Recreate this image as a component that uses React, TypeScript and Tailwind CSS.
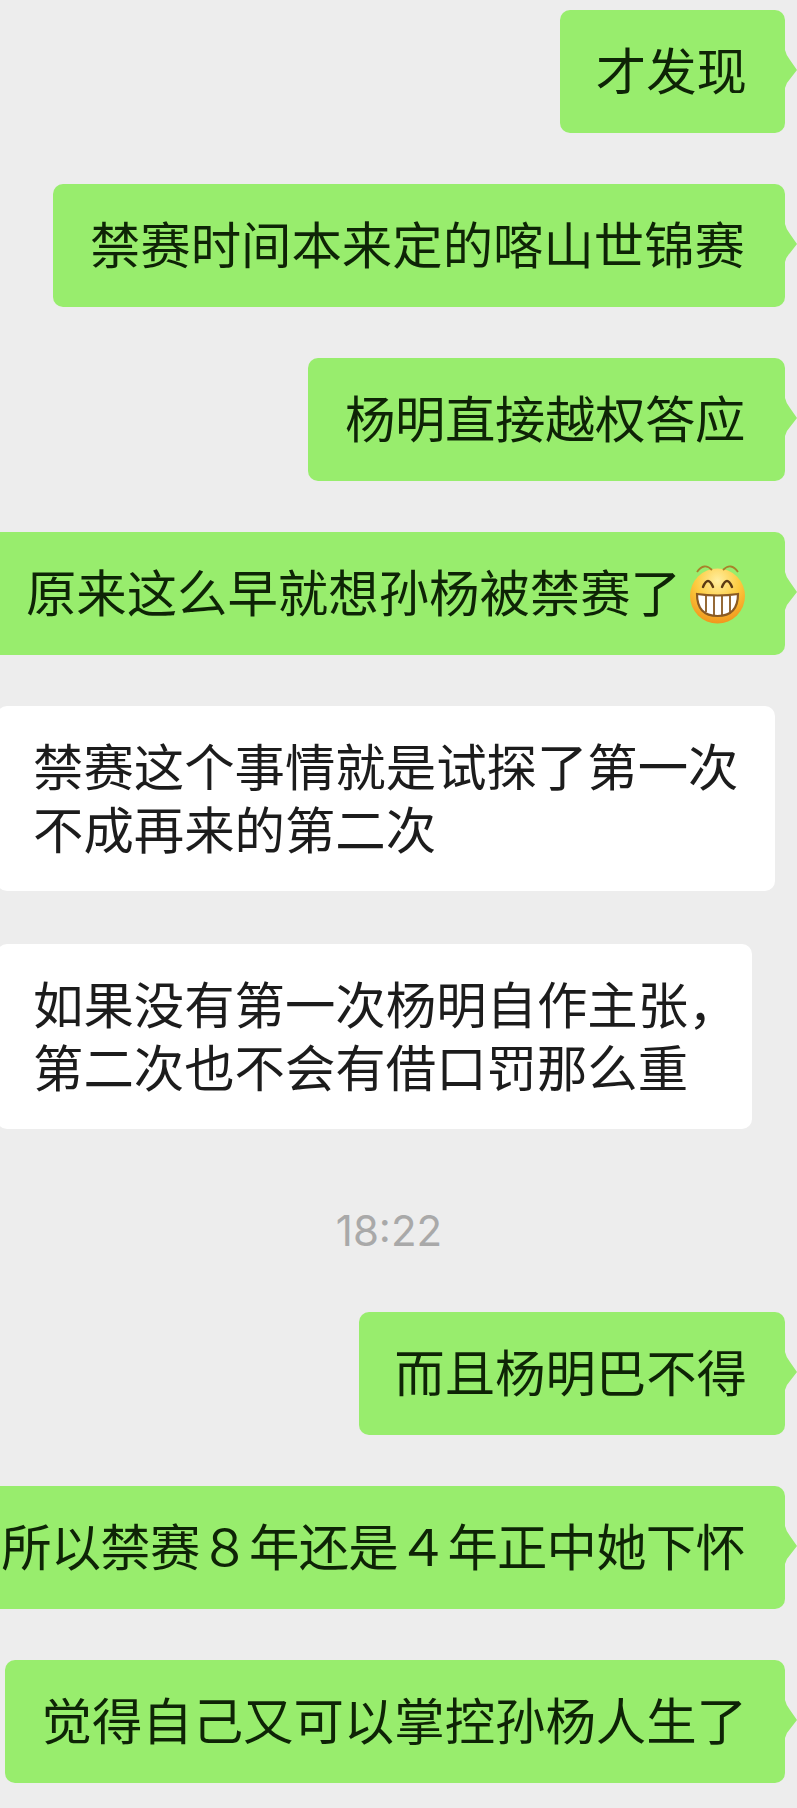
const fontClass = "font-['Noto_Sans_CJK_SC','PingFang_SC',sans-serif]"

// 开口笑 emoji
function GrinEmoji() {
  return (
    <svg viewBox="0 0 58 60" className="ml-[8px] mr-[-2px] h-[60px] w-[58px] shrink-0">
      <defs>
        <radialGradient id="face" cx="50%" cy="22%" r="80%">
          <stop offset="0%" stopColor="#ffeea0" />
          <stop offset="50%" stopColor="#fdcb3f" />
          <stop offset="100%" stopColor="#f0931a" />
        </radialGradient>
      </defs>
      <circle cx="28.5" cy="32" r="27.5" fill="url(#face)" />
      <path d="M8 8 Q15 -2 23 6" fill="none" stroke="#a8822a" strokeWidth="1.8" />
      <path d="M34 6 Q42 -2 49 8" fill="none" stroke="#a8822a" strokeWidth="1.8" />
      <path d="M14 23 Q19 11 24 23" fill="none" stroke="#5b3a12" strokeWidth="2.4" strokeLinecap="round" />
      <path d="M33 23 Q38 11 43 23" fill="none" stroke="#5b3a12" strokeWidth="2.4" strokeLinecap="round" />
      <path d="M8 30 Q28.5 33 49 30 Q49 52 28.5 52 Q8 52 8 30Z" fill="#fff" stroke="#8a5a22" strokeWidth="2.2" />
      <path d="M17 32 V48 M25 32 V51 M33 32 V51 M41 32 V48" stroke="#8a5a22" strokeWidth="1.8" fill="none" />
    </svg>
  )
}

function Tail() {
  return (
    <svg viewBox="0 0 12 38" className="absolute left-full top-[40px] h-[38px] w-[12px]">
      <path d="M0 0 Q1 5 5 10 L12 20 L5 29 Q1 33 0 38Z" fill="#98ed6d" />
    </svg>
  )
}

function Sent({ text, width, emoji, textClass = 'mb-[6px]', padding = 'pr-[40px]' }: { text: string; width: string; emoji?: boolean; textClass?: string; padding?: string }) {
  return (
    <div className={`relative mr-[12px] flex h-[123px] shrink-0 items-center justify-end whitespace-nowrap rounded-[10px] bg-[#98ed6d] text-[50.4px] leading-[63px] text-[#0e2406] ${padding} ${width}`}>
      <span className={textClass}>{text}</span>
      {emoji && <GrinEmoji />}
      <Tail />
    </div>
  )
}

function Received({ lines, width }: { lines: string[]; width: string }) {
  return (
    <div className={`ml-[-3px] h-[185px] shrink-0 whitespace-nowrap rounded-[10px] bg-white pl-[36px] pt-[27px] text-[50.4px] leading-[63px] text-[#1c1c1c] ${width}`}>
      {lines.map((line) => (
        <div key={line}>{line}</div>
      ))}
    </div>
  )
}

export default function App() {
  return (
    <div className={`flex h-[1808px] w-[797px] flex-col overflow-hidden bg-[#ededed] pt-[10px] ${fontClass}`}>
      <div className="flex flex-col items-end gap-[51px]">
        <Sent text="才发现" width="w-[225px]" padding="pr-[38px]" />
        <Sent text="禁赛时间本来定的喀山世锦赛" width="w-[732px]" />
        <Sent text="杨明直接越权答应" width="w-[477px]" textClass="mb-[6px] tracking-[-0.4px]" />
        <Sent text="原来这么早就想孙杨被禁赛了" width="w-[800px]" emoji />
      </div>

      <div className="mt-[51px] flex flex-col items-start gap-[53px]">
        <Received lines={['禁赛这个事情就是试探了第一次', '不成再来的第二次']} width="w-[778px]" />
        <Received lines={['如果没有第一次杨明自作主张，', '第二次也不会有借口罚那么重']} width="w-[755px]" />
      </div>

      <div className="mt-[78px] pr-[19px] text-center font-['Inter',sans-serif] text-[42px] leading-[48px] text-[#a9a9a9]">
        18:22
      </div>

      <div className="mt-[57px] flex flex-col items-end gap-[51px]">
        <Sent text="而且杨明巴不得" width="w-[426px]" padding="pr-[38px]" />
        <Sent text="所以禁赛８年还是４年正中她下怀" width="w-[800px]" textClass="mb-[6px] tracking-[-0.8px]" />
        <Sent text="觉得自己又可以掌控孙杨人生了" width="w-[780px]" padding="pr-[38px]" />
      </div>
    </div>
  )
}
